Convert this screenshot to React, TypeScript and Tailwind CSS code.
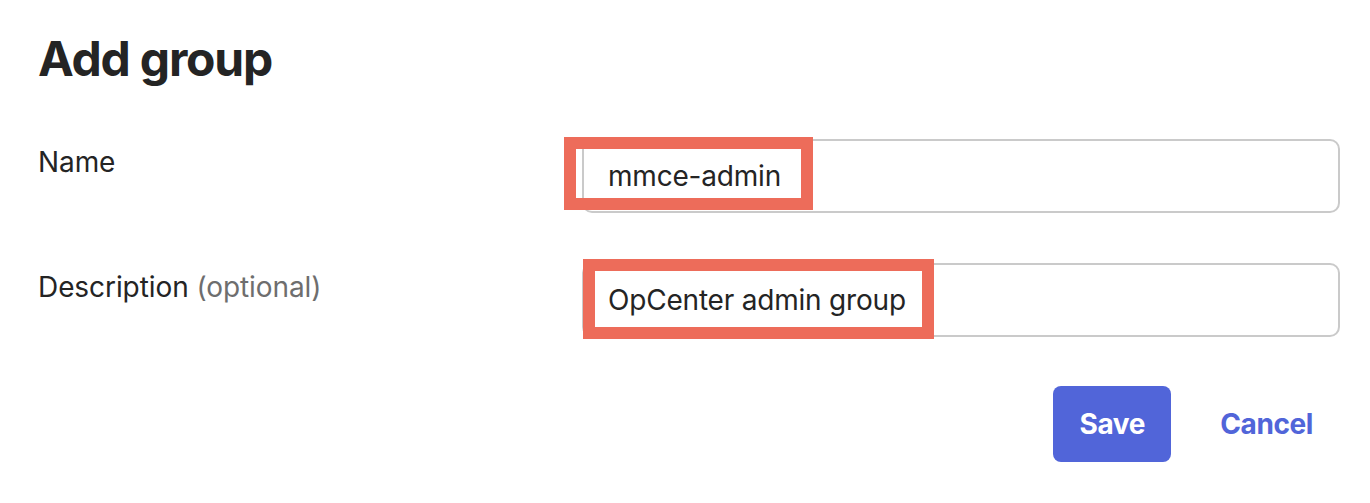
import { useState } from "react";

// annotation boxes drawn over the fields in the reference
function Highlight({ className }: { className: string }) {
  return <div className={`pointer-events-none absolute border-[12px] border-[#ed6c5a] ${className}`} />;
}

export default function App() {
  const [name, setName] = useState("mmce-admin");
  const [description, setDescription] = useState("OpCenter admin group");

  return (
    <div className="min-h-screen bg-white pl-[38px] pr-[30px] pt-[30px] font-['Inter',sans-serif] tracking-[-0.08px] text-[#242424]">
      <h1 className="text-[48px] font-bold leading-[58px] tracking-[-1.2px]">Add group</h1>

      <form onSubmit={(e) => e.preventDefault()} className="mt-[51px]">
        <div className="flex">
          <label className="mt-[3px] w-[544px] shrink-0 text-[28px] leading-[40px]">Name</label>
          <div className="relative flex-1">
            <input
              value={name}
              onChange={(e) => setName(e.target.value)}
              className="h-[74px] w-full rounded-[10px] border-2 border-[#cacaca] px-[24px] text-[28px] tracking-[-0.2px] text-[#242424] outline-none"
            />
            <Highlight className="left-[-18px] top-[-2px] h-[73px] w-[249px]" />
          </div>
        </div>

        <div className="mt-[50px] flex">
          <label className="mt-[4px] w-[544px] shrink-0 text-[28px] leading-[40px]">
            Description <span className="text-[#6e6e6e]">(optional)</span>
          </label>
          <div className="relative flex-1">
            <input
              value={description}
              onChange={(e) => setDescription(e.target.value)}
              className="h-[74px] w-full rounded-[10px] border-2 border-[#cacaca] px-[24px] text-[28px] tracking-[-0.2px] text-[#242424] outline-none"
            />
            <Highlight className="left-[1px] top-[-4px] h-[80px] w-[351px]" />
          </div>
        </div>

        <div className="mt-[49px] flex justify-end gap-[22px]">
          <button
            type="submit"
            className="h-[76px] w-[118px] rounded-[8px] bg-[#5165d9] text-[28px] font-bold tracking-[-0.4px] text-white"
          >
            Save
          </button>
          <button type="button" className="h-[76px] px-[27px] text-[28px] font-bold tracking-[-0.4px] text-[#5165d9]">
            Cancel
          </button>
        </div>
      </form>
    </div>
  );
}
